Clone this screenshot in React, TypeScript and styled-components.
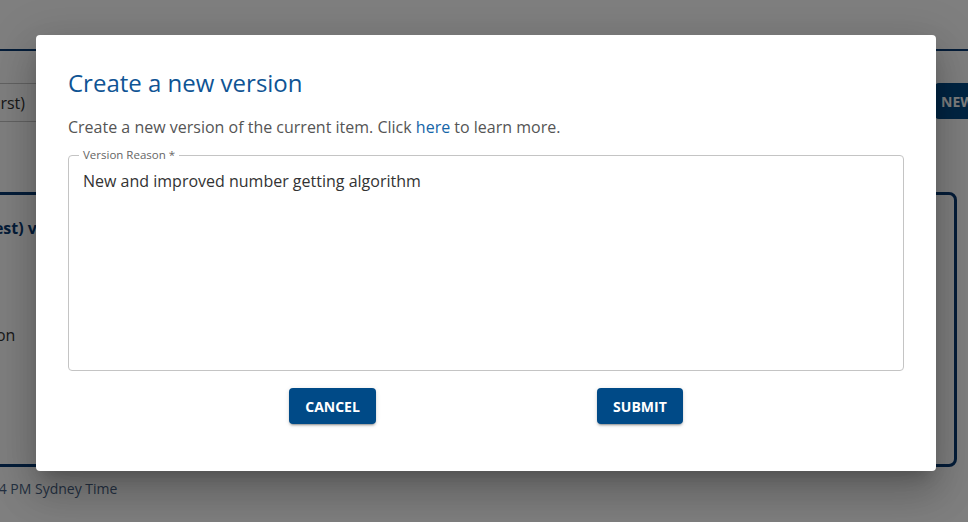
import React from "react";
import styled, { createGlobalStyle } from "styled-components";

const GlobalStyle = createGlobalStyle`
  html, body { margin: 0; padding: 0; }
  body { font-family: "Open Sans", "Noto Sans", Arial, sans-serif; background: #fff; }
  * { box-sizing: border-box; }
`;

const Page = styled.div`
  position: relative;
  width: 968px;
  height: 522px;
  overflow: hidden;
  background: #fff;
`;

const Header = styled.div`
  height: 51px;
  border-bottom: 2px solid #0b3a73;
`;

const Toolbar = styled.div`
  display: flex;
  align-items: center;
  margin-top: 32px;
  height: 39px;
`;

const SelectBox = styled.div`
  margin-left: -140px;
  width: 300px;
  height: 39px;
  border: 1px solid #c4c4c4;
  border-left: none;
  display: flex;
  align-items: center;
  justify-content: flex-end;
  padding-right: 134px;
  font-size: 16px;
  color: #333;
  white-space: nowrap;
`;

const NewButton = styled.div`
  margin-left: auto;
  margin-right: -60px;
  width: 93px;
  height: 36px;
  align-self: flex-start;
  background: #004a87;
  color: #fff;
  font-weight: 700;
  font-size: 14px;
  display: flex;
  align-items: center;
  padding-left: 6px;
  border-radius: 4px 0 0 4px;
  white-space: nowrap;
`;

const Card = styled.div`
  margin-top: 70px;
  margin-left: -20px;
  margin-right: 11px;
  height: 275px;
  border: 3px solid #0b3a73;
  border-radius: 8px;
  padding: 22px 0 0 0;
`;

const CardTitle = styled.div`
  font-size: 16px;
  font-weight: 700;
  color: #0b3a73;
  margin-left: -98px;
  white-space: nowrap;
`;

const CardLabel = styled.div`
  margin-top: 85px;
  margin-left: -53px;
  font-size: 16px;
  color: #333;
  white-space: nowrap;
`;

const Footer = styled.div`
  margin-top: 12px;
  margin-left: -29px;
  font-size: 14px;
  color: #4a6384;
  white-space: nowrap;
`;

const Overlay = styled.div`
  position: absolute;
  inset: 0;
  background: rgba(0, 0, 0, 0.5);
  display: flex;
  align-items: flex-start;
  padding: 35px 0 0 36px;
`;

const Dialog = styled.div`
  width: 900px;
  height: 436px;
  background: #fff;
  border-radius: 4px;
  box-shadow: 0px 11px 15px -7px rgba(0, 0, 0, 0.2),
    0px 24px 38px 3px rgba(0, 0, 0, 0.14),
    0px 9px 46px 8px rgba(0, 0, 0, 0.12);
  padding: 32px 32px 0 32px;
  display: flex;
  flex-direction: column;
`;

const Title = styled.h2`
  margin: 0;
  font-size: 24px;
  line-height: 32px;
  font-weight: 400;
  color: #0f5494;
`;

const Description = styled.p`
  margin: 16px 0 0 0;
  font-size: 16px;
  line-height: 24px;
  color: #555;
`;

const Link = styled.a`
  color: #1565a8;
  text-decoration: none;
`;

const Field = styled.fieldset`
  margin: 9px 0 0 0;
  padding: 7px 14px 0 14px;
  height: 223px;
  border: 1px solid #c4c4c4;
  border-radius: 4px;
  min-width: 0;
`;

const Legend = styled.legend`
  padding: 0 4px;
  margin-left: -4px;
  font-size: 11.5px;
  line-height: 14px;
  color: #666;
`;

const FieldText = styled.div`
  font-size: 16px;
  line-height: 24px;
  color: #333;
`;

const Actions = styled.div`
  display: flex;
  justify-content: space-evenly;
  margin-top: 17px;
`;

const Button = styled.button`
  height: 36px;
  padding: 0 16px;
  border: none;
  border-radius: 4px;
  background: #004a87;
  color: #fff;
  font-family: inherit;
  font-size: 14px;
  font-weight: 700;
  letter-spacing: 0;
  box-shadow: 0px 3px 1px -2px rgba(0, 0, 0, 0.2),
    0px 2px 2px 0px rgba(0, 0, 0, 0.14),
    0px 1px 5px 0px rgba(0, 0, 0, 0.12);
  cursor: pointer;
`;

export default function App() {
  return (
    <>
      <GlobalStyle />
      <Page>
        <Header />
        <Toolbar>
          <SelectBox>Version 1 (First)</SelectBox>
          <NewButton>NEW</NewButton>
        </Toolbar>
        <Card>
          <CardTitle>Version 2 (Latest) version</CardTitle>
          <CardLabel>Description</CardLabel>
        </Card>
        <Footer>12:34 PM Sydney Time</Footer>
        <Overlay>
          <Dialog role="dialog">
            <Title>Create a new version</Title>
            <Description>
              Create a new version of the current item. Click <Link href="#">here</Link> to learn more.
            </Description>
            <Field>
              <Legend>Version Reason *</Legend>
              <FieldText>New and improved number getting algorithm</FieldText>
            </Field>
            <Actions>
              <Button>CANCEL</Button>
              <Button>SUBMIT</Button>
            </Actions>
          </Dialog>
        </Overlay>
      </Page>
    </>
  );
}
